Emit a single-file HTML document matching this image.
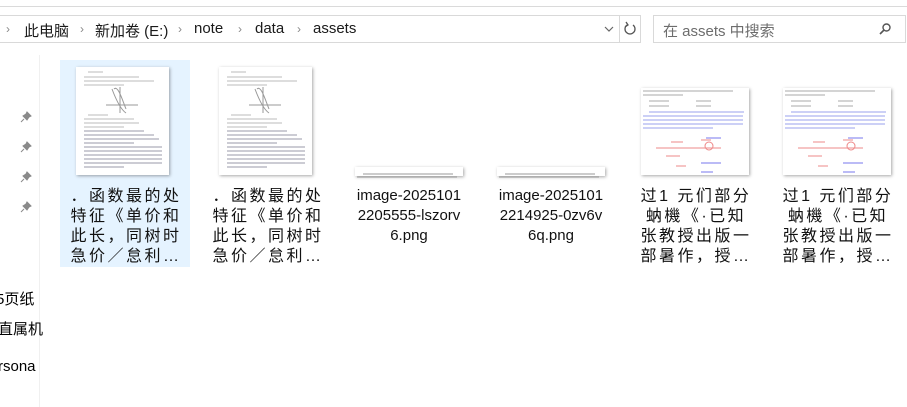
<!DOCTYPE html>
<html><head><meta charset="utf-8"><style>
*{margin:0;padding:0;box-sizing:border-box}
body{width:907px;height:407px;background:#fff;overflow:hidden;position:relative;font-family:"Segoe UI","Liberation Sans","Noto Sans CJK SC",sans-serif;color:#000}
.a{position:absolute}
.crumb{top:20px;font-size:15px;color:#1a1a1a;white-space:nowrap}
.chev{color:#888;font-size:12px;top:22px}
.tile{position:absolute;top:60px;width:130px;height:207px}
.thumb{position:absolute;background:#fff;box-shadow:1px 1px 3px rgba(0,0,0,.35)}
.lab{position:absolute;top:126px;left:0;width:130px;text-align:center;font-size:15px;line-height:20px;font-family:"Liberation Sans","Noto Sans CJK SC",sans-serif;color:#111}
.cn{font-size:16px;letter-spacing:2.5px;padding-left:2px;white-space:nowrap;top:127px}
.pin{position:absolute;left:20px;width:12px;height:12px}
</style></head><body>
<div class="a" style="left:0;top:6px;width:907px;height:1px;background:#dadada"></div>
<div class="a" style="left:0;top:15px;width:641px;height:28px;border:1px solid #d9d9d9;border-left:none"></div>
<div class="a" style="left:619px;top:15px;width:1px;height:28px;background:#d9d9d9"></div>
<div class="a chev" style="left:6px">&#x203A;</div>
<div class="a crumb" style="left:24px">此电脑</div>
<div class="a chev" style="left:80px">&#x203A;</div>
<div class="a crumb" style="left:95px">新加卷 (E:)</div>
<div class="a chev" style="left:178px">&#x203A;</div>
<div class="a crumb" style="left:194px">note</div>
<div class="a chev" style="left:238px">&#x203A;</div>
<div class="a crumb" style="left:255px">data</div>
<div class="a chev" style="left:297px">&#x203A;</div>
<div class="a crumb" style="left:313px">assets</div>
<svg class="a" style="left:603px;top:24px" width="12" height="10"><path d="M2 3 L6 7 L10 3" fill="none" stroke="#666" stroke-width="1.2"/></svg>
<svg class="a" style="left:622px;top:21px" width="16" height="16"><path d="M11 4 A5 5 0 1 1 5 4" fill="none" stroke="#555" stroke-width="1.3"/><path d="M4 1 L6 4 L3 6" fill="none" stroke="#555" stroke-width="1.3"/></svg>
<div class="a" style="left:653px;top:15px;width:253px;height:28px;border:1px solid #d9d9d9"></div>
<div class="a" style="left:663px;top:20px;font-size:15px;color:#6d6d6d;font-family:'Segoe UI','Liberation Sans','Noto Sans CJK SC',sans-serif">在 assets 中搜索</div>
<svg class="a" style="left:878px;top:22px" width="14" height="14"><circle cx="8.5" cy="5.5" r="3.5" fill="none" stroke="#555" stroke-width="1.4"/><path d="M6 8 L2 12" stroke="#555" stroke-width="1.6"/></svg>
<div class="a" style="left:39px;top:55px;width:1px;height:352px;background:#f0f0f0"></div>
<svg class="pin" style="top:111px" viewBox="0 0 12 12"><path d="M7 1 L11 5 L9 6 L7 9 L3 5 L6 3 Z M4 8 L1 11" fill="#8a8a8a" stroke="#8a8a8a"/></svg>
<svg class="pin" style="top:141px" viewBox="0 0 12 12"><path d="M7 1 L11 5 L9 6 L7 9 L3 5 L6 3 Z M4 8 L1 11" fill="#8a8a8a" stroke="#8a8a8a"/></svg>
<svg class="pin" style="top:171px" viewBox="0 0 12 12"><path d="M7 1 L11 5 L9 6 L7 9 L3 5 L6 3 Z M4 8 L1 11" fill="#8a8a8a" stroke="#8a8a8a"/></svg>
<svg class="pin" style="top:201px" viewBox="0 0 12 12"><path d="M7 1 L11 5 L9 6 L7 9 L3 5 L6 3 Z M4 8 L1 11" fill="#8a8a8a" stroke="#8a8a8a"/></svg>
<div class="a" style="left:-4px;top:288px;font-size:15px;font-family:'Liberation Sans','Noto Sans CJK SC',sans-serif">5页纸</div>
<div class="a" style="left:-2px;top:318px;font-size:15px;font-family:'Liberation Sans','Noto Sans CJK SC',sans-serif">直属机</div>
<div class="a" style="left:-2px;top:358px;font-size:15px">rsona</div>

<div class="tile" style="left:60px;background:#e5f3ff">
 <div class="thumb" style="left:16px;top:7px;width:93px;height:108px">
  <svg width="93" height="108"><g stroke="#bbb" stroke-width="1"><path d="M12 5h15M8 10h55M8 14h70M8 18h40"/><path d="M12 48h20M8 52h50M8 56h55M8 60h40"/></g><path d="M36 22c3 8 8 20 14 24M38 22c4-4 8 10 12 20M30 38h32M44 20v26" stroke="#999" fill="none"/><g stroke="#99a" stroke-width="1"><path d="M8 64h60M8 68h70M8 72h75M8 76h50M8 80h78M8 84h78M8 88h78M8 92h78M8 96h78M8 100h40"/></g></svg>
 </div>
 <div class="lab cn">．函数最的处<br>特征《单价和<br>此长，同树时<br>急价／怠利…</div>
</div>
<div class="tile" style="left:202px">
 <div class="thumb" style="left:17px;top:7px;width:93px;height:108px">
  <svg width="93" height="108"><g stroke="#bbb" stroke-width="1"><path d="M12 5h15M8 10h55M8 14h70M8 18h40"/><path d="M12 48h20M8 52h50M8 56h55M8 60h40"/></g><path d="M36 22c3 8 8 20 14 24M38 22c4-4 8 10 12 20M30 38h32M44 20v26" stroke="#999" fill="none"/><g stroke="#99a" stroke-width="1"><path d="M8 64h60M8 68h70M8 72h75M8 76h50M8 80h78M8 84h78M8 88h78M8 92h78M8 96h78M8 100h40"/></g></svg>
 </div>
 <div class="lab cn">．函数最的处<br>特征《单价和<br>此长，同树时<br>急价／怠利…</div>
</div>
<div class="tile" style="left:344px">
 <div class="thumb" style="left:11px;top:107px;width:108px;height:9px"><svg width="108" height="9"><path d="M8 3h90M2 6h100" stroke="#999"/></svg></div>
 <div class="lab">image-2025101<br>2205555-lszorv<br>6.png</div>
</div>
<div class="tile" style="left:486px">
 <div class="thumb" style="left:11px;top:107px;width:108px;height:9px"><svg width="108" height="9"><path d="M8 3h90M2 6h100" stroke="#999"/></svg></div>
 <div class="lab">image-2025101<br>2214925-0zv6v<br>6q.png</div>
</div>
<div class="tile" style="left:630px">
 <div class="thumb" style="left:11px;top:28px;width:108px;height:87px">
  <svg width="108" height="87"><g stroke="#aaa"><path d="M2 3h90M2 7h40M8 13h20M55 13h15M8 18h20M55 18h15"/></g><g stroke="#99a0ee"><path d="M8 24h95M2 28h100M2 32h100M2 36h100M2 40h70"/></g><g stroke="#e88" fill="none"><path d="M15 60h65M30 54h12M60 52h10M25 68h14M35 78h10"/><circle cx="68" cy="58" r="4"/></g><g stroke="#77e" fill="none"><path d="M65 50h15M60 75h20M60 84h12"/></g></svg>
 </div>
 <div class="lab cn">过1 元们部分<br>蚋機《·已知<br>张教授出版一<br>部暑作，授…</div>
</div>
<div class="tile" style="left:772px">
 <div class="thumb" style="left:11px;top:28px;width:108px;height:87px">
  <svg width="108" height="87"><g stroke="#aaa"><path d="M2 3h90M2 7h40M8 13h20M55 13h15M8 18h20M55 18h15"/></g><g stroke="#99a0ee"><path d="M8 24h95M2 28h100M2 32h100M2 36h100M2 40h70"/></g><g stroke="#e88" fill="none"><path d="M15 60h65M30 54h12M60 52h10M25 68h14M35 78h10"/><circle cx="68" cy="58" r="4"/></g><g stroke="#77e" fill="none"><path d="M65 50h15M60 75h20M60 84h12"/></g></svg>
 </div>
 <div class="lab cn">过1 元们部分<br>蚋機《·已知<br>张教授出版一<br>部暑作，授…</div>
</div>
</body></html>
